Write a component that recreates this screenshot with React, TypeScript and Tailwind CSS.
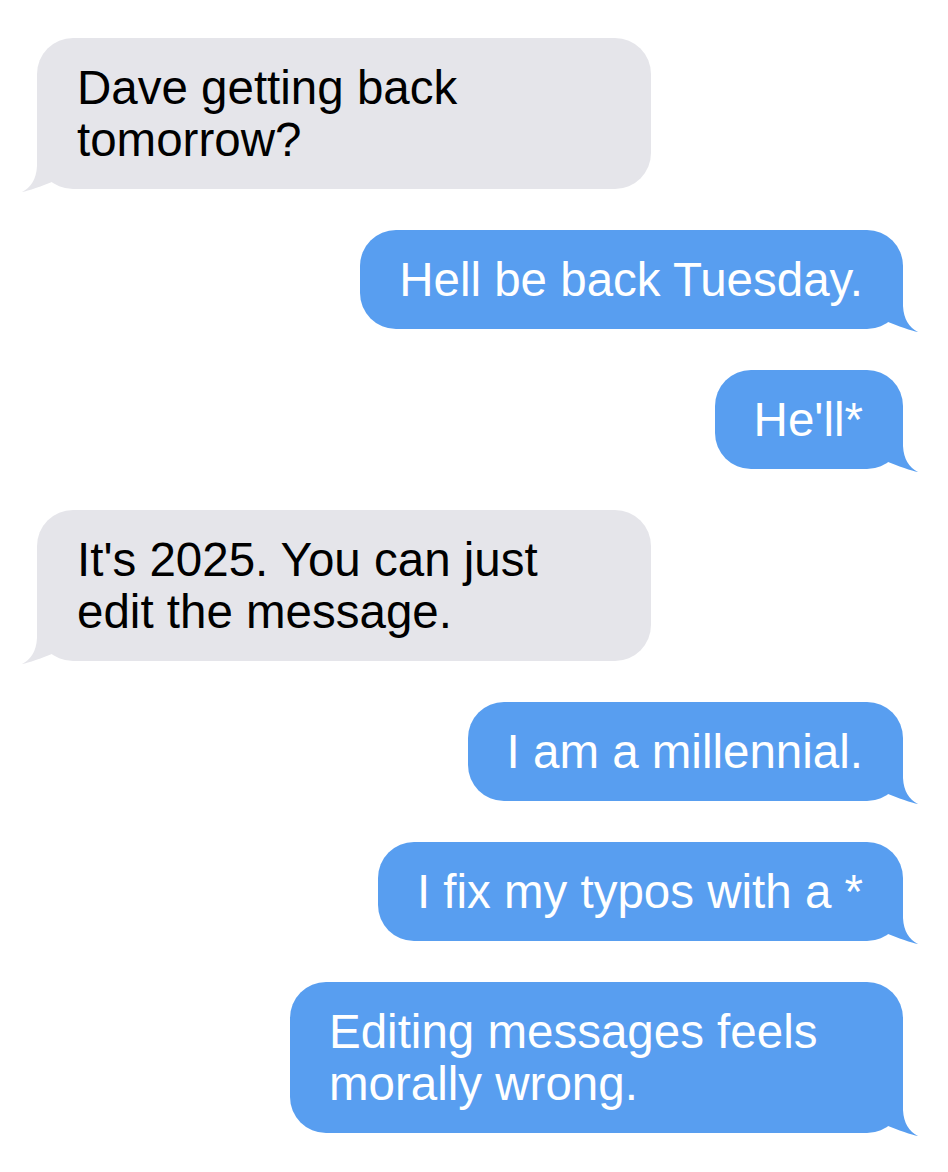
import React from 'react';

type Message = {
  text: string;
  fromMe: boolean;
};

const MESSAGES: Message[] = [
  { text: 'Dave getting back tomorrow?', fromMe: false },
  { text: 'Hell be back Tuesday.', fromMe: true },
  { text: "He'll*", fromMe: true },
  { text: "It's 2025. You can just edit the message.", fromMe: false },
  { text: 'I am a millennial.', fromMe: true },
  { text: 'I fix my typos with a *', fromMe: true },
  { text: 'Editing messages feels morally wrong.', fromMe: true },
];

// tail drawn for the right-hand side; mirrored for incoming bubbles
function Tail({ color, left }: { color: string; left: boolean }) {
  return (
    <svg
      width="60"
      height="50"
      viewBox="0 0 60 50"
      className={
        left
          ? 'absolute left-[-15px] bottom-[-5px] -scale-x-100'
          : 'absolute right-[-15px] bottom-[-5px]'
      }
      aria-hidden="true"
    >
      <path d="M5 5 L45 5 L45 22 Q46 41 60 48 Q50 46 25 36 L5 36 Z" fill={color} />
    </svg>
  );
}

function Bubble({ message }: { message: Message }) {
  const { text, fromMe } = message;
  return (
    <div
      className={
        fromMe
          ? 'relative self-end max-w-[613px] rounded-[36px] bg-[#589ef0] pl-[39px] pr-[40px] py-[23.5px] text-white'
          : 'relative self-start max-w-[614px] rounded-[36px] bg-[#e5e5ea] pl-10 pr-10 py-[23.5px] text-black'
      }
    >
      <Tail color={fromMe ? '#589ef0' : '#e5e5ea'} left={!fromMe} />
      <p className="relative text-[47.5px] leading-[52px]">{text}</p>
    </div>
  );
}

export default function App() {
  return (
    <div className="min-h-screen bg-white font-['Liberation_Sans',Arial,sans-serif]">
      <div className="flex flex-col gap-[41px] pt-[38px] pb-[39px] pl-[37px] pr-[45px]">
        {MESSAGES.map((m, i) => (
          <Bubble key={i} message={m} />
        ))}
      </div>
    </div>
  );
}
